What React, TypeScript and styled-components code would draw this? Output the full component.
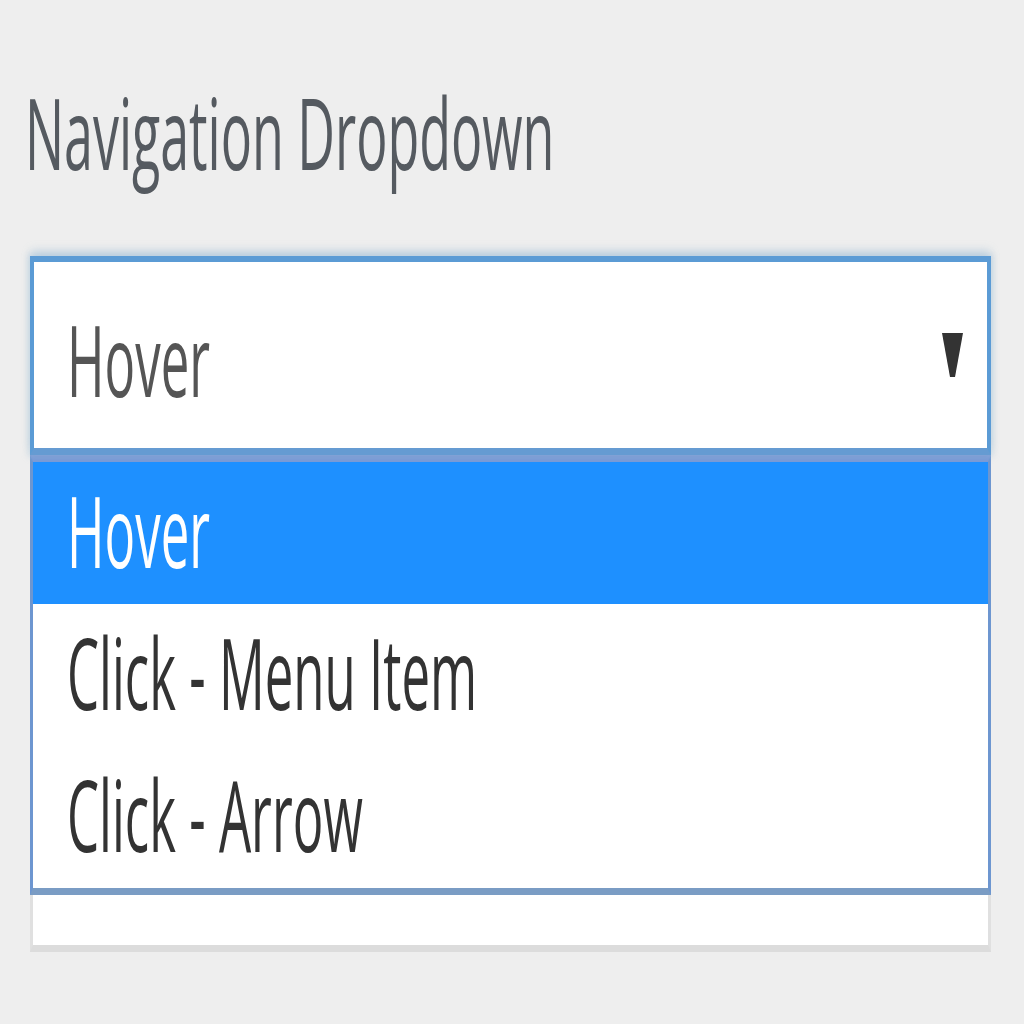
import React from "react";
import styled, { createGlobalStyle } from "styled-components";

const Global = createGlobalStyle`
  html, body { margin: 0; padding: 0; background: #eeeeee; }
  body { font-family: "Open Sans", "Noto Sans", sans-serif; }
`;

const Page = styled.div`
  padding: 83px 0 60px 30px;
  min-height: 1024px;
  box-sizing: border-box;
`;

const Squeezed = styled.span<{ $color: string; $scale?: number }>`
  display: inline-block;
  white-space: nowrap;
  transform: scaleX(${(p) => p.$scale ?? 0.52});
  transform-origin: left center;
  color: ${(p) => p.$color};
`;

const Title = styled.div`
  font-size: 98px;
  line-height: 98px;
  height: 98px;
  margin-left: -5px;
`;

const Field = styled.div`
  width: 961px;
  margin-top: 75px;
  display: flex;
  flex-direction: column;
`;

const SelectBox = styled.div`
  background: #ffffff;
  border-style: solid;
  border-color: #5b9bd5;
  border-width: 6px 4px 7px 4px;
  border-bottom-color: #659bd2;
  padding: 48px 24px 40px 33px;
  height: 98px;
  display: flex;
  align-items: flex-start;
  justify-content: space-between;
  font-size: 98px;
  line-height: 98px;
  box-shadow: 0 -7px 8px -1px rgba(150, 185, 212, 0.4),
    0 0 6px 2px rgba(150, 185, 212, 0.35);
  position: relative;
  z-index: 1;
`;

const Arrow = styled.svg`
  width: 21px;
  height: 44px;
  margin-top: 23px;
  flex: none;
`;

const Menu = styled.div`
  background: #ffffff;
  border-style: solid;
  border-width: 7px 3px 7px 3px;
  border-color: #7a9ad6 #6d96d0 #7a9cc4 #6d96d0;
  display: flex;
  flex-direction: column;
`;

const Option = styled.div<{ $active?: boolean }>`
  height: 142px;
  box-sizing: border-box;
  padding: 19px 0 0 34px;
  font-size: 98px;
  line-height: 98px;
  background: ${(p) => (p.$active ? "#1e90ff" : "#ffffff")};
`;

const Filler = styled.div`
  height: 50px;
  background: #ffffff;
  border-style: solid;
  border-color: #e0e0e0;
  border-width: 0 3px 7px 3px;
  border-bottom-color: #dcdcdc;
`;

const options = ["Hover", "Click - Menu Item", "Click - Arrow"];

export default function App() {
  return (
    <>
      <Global />
      <Page>
        <Title>
          <Squeezed $color="#555a60" $scale={0.53}>Navigation Dropdown</Squeezed>
        </Title>
        <Field>
          <SelectBox>
            <Squeezed $color="#555555">Hover</Squeezed>
            <Arrow viewBox="0 0 21 44">
              <polygon points="0,0 21,0 13,44 8,44" fill="#333333" />
            </Arrow>
          </SelectBox>
          <Menu>
            {options.map((o, i) => (
              <Option key={o} $active={i === 0}>
                <Squeezed $color={i === 0 ? "#ffffff" : "#333333"}>{o}</Squeezed>
              </Option>
            ))}
          </Menu>
          <Filler />
        </Field>
      </Page>
    </>
  );
}
